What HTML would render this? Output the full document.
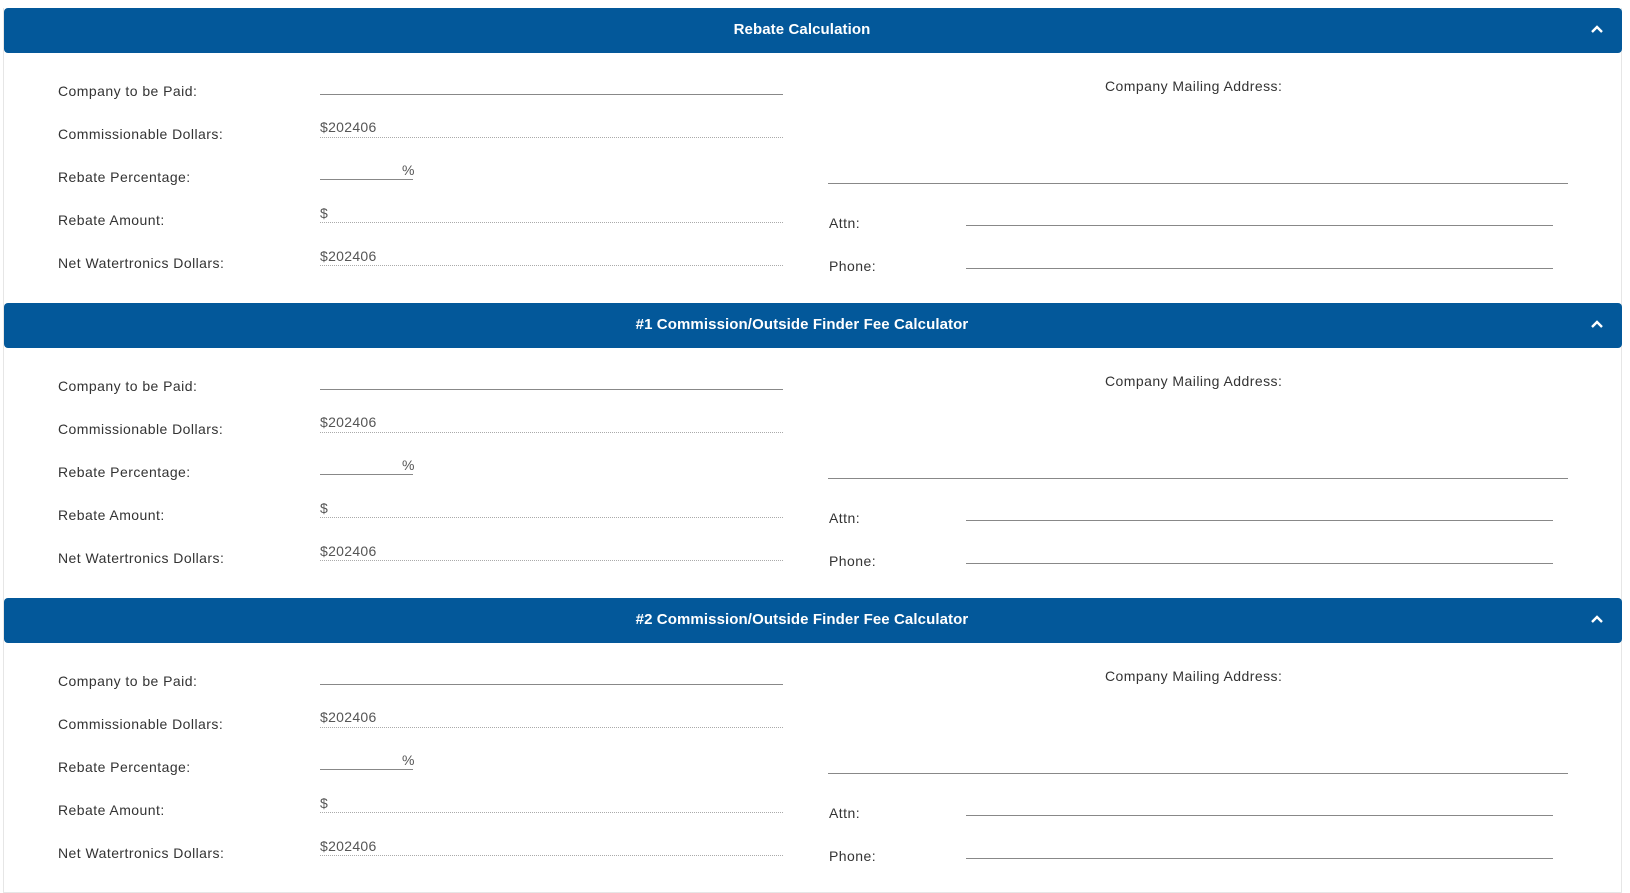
<!DOCTYPE html>
<html><head><meta charset="utf-8"><style>
*{margin:0;padding:0;box-sizing:border-box}
body{width:1630px;height:893px;background:#fff;position:relative;overflow:hidden;font-family:"Liberation Sans",sans-serif;color:#333}
.panel{position:absolute;left:3px;width:1619px;border-left:1px solid #e6e6e6;border-right:1px solid #e6e6e6}
.hdr{position:absolute;left:4px;width:1618px;height:45px;background:#03589a;border-radius:4px;color:#fff;font-size:15px;font-weight:bold;text-align:center;line-height:44px;padding-right:22px;letter-spacing:0.1px}
.hdr svg{position:absolute;left:1586px;top:16px}
.t{position:absolute;font-size:14px;line-height:14px;white-space:nowrap;letter-spacing:0.45px;color:#333}
.v{position:absolute;font-size:14px;line-height:14px;color:#555;letter-spacing:0.3px}
.ln{position:absolute;height:0;border-top:1px solid #888}
.dl{position:absolute;height:0;border-top:1px dotted #aaa}
</style></head><body>
<div class="panel" style="top:8px;height:885px;border-bottom:1px solid #e6e6e6"></div>

<div id="s"></div>
<script>
var titles=["Rebate Calculation","#1 Commission/Outside Finder Fee Calculator","#2 Commission/Outside Finder Fee Calculator"];
var h="";
for(var i=0;i<3;i++){
 var o=i*295;
 h+='<div class="hdr" style="top:'+(8+o)+'px">'+titles[i]+'<svg width="14" height="10" viewBox="0 0 14 10"><path d="M2 8 L7 3 L12 8" stroke="#fff" stroke-width="2.4" fill="none"/></svg></div>';
 var lb=["Company to be Paid:","Commissionable Dollars:","Rebate Percentage:","Rebate Amount:","Net Watertronics Dollars:"];
 for(var r=0;r<5;r++){h+='<div class="t" style="left:58px;top:'+(95+43*r-11+o)+'px">'+lb[r]+'</div>';}
 h+='<div class="ln" style="left:320px;width:463px;top:'+(94+o)+'px"></div>';
 h+='<div class="v" style="left:320px;top:'+(120+o)+'px">$202406</div>';
 h+='<div class="dl" style="left:320px;width:463px;top:'+(137+o)+'px"></div>';
 h+='<div class="v" style="left:402px;top:'+(163+o)+'px">%</div>';
 h+='<div class="ln" style="left:320px;width:93px;top:'+(179+o)+'px"></div>';
 h+='<div class="v" style="left:320px;top:'+(206+o)+'px">$</div>';
 h+='<div class="dl" style="left:320px;width:463px;top:'+(222+o)+'px"></div>';
 h+='<div class="v" style="left:320px;top:'+(249+o)+'px">$202406</div>';
 h+='<div class="dl" style="left:320px;width:463px;top:'+(265+o)+'px"></div>';
 h+='<div class="t" style="left:1105px;top:'+(79+o)+'px">Company Mailing Address:</div>';
 h+='<div class="ln" style="left:828px;width:740px;top:'+(183+o)+'px"></div>';
 h+='<div class="t" style="left:829px;top:'+(216+o)+'px">Attn:</div>';
 h+='<div class="ln" style="left:966px;width:587px;top:'+(225+o)+'px"></div>';
 h+='<div class="t" style="left:829px;top:'+(259+o)+'px">Phone:</div>';
 h+='<div class="ln" style="left:966px;width:587px;top:'+(268+o)+'px"></div>';
}
document.getElementById("s").outerHTML=h;
</script>
</body></html>
